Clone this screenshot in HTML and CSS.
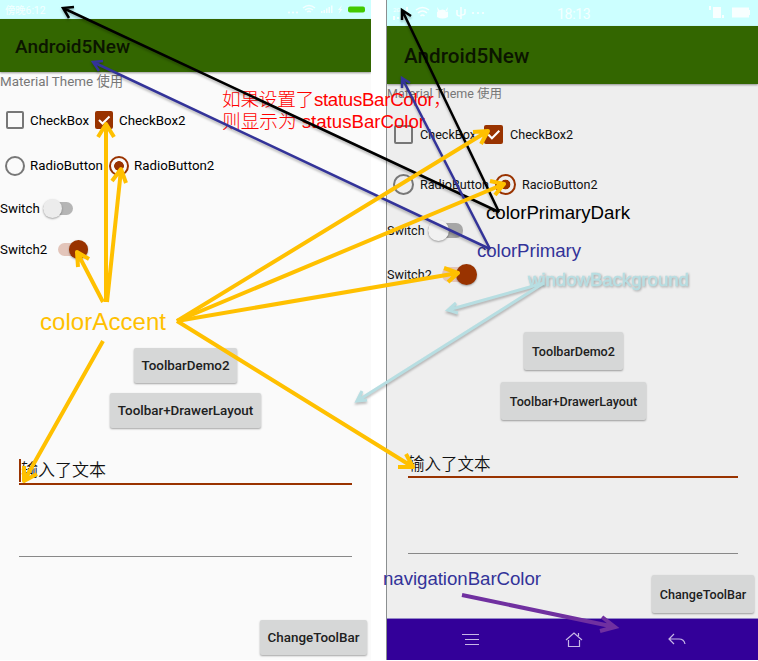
FILE: index.html
```html
<!DOCTYPE html>
<html lang="zh">
<head>
<meta charset="utf-8">
<title>Android5New</title>
<link rel="stylesheet" href="styles.css">
</head>
<body>
<main class="board">
  <section class="phone left">
    <header class="status">
      <span class="clock">傍晚6:12</span>
      <svg class="status-icons" width="84" height="19" viewBox="0 0 84 19">
        <g fill="#f4ffff"><circle cx="3" cy="12.500" r="1.100"/><circle cx="7" cy="12.500" r="1.100"/><circle cx="11" cy="12.500" r="1.100"/>
        <path d="M35 13h1.500v-2H35zM37.500 13H39v-3h-1.500zM40 13h1.500V8.500H40zM42.500 13H44V7h-1.500zM45 13h1.500V5.500H45zM56 5l-4 5h2l-1.500 4 4-5h-2z"/></g>
        <g fill="none" stroke="#f4ffff" stroke-width="1.500"><path d="M17 8q6-5 12 0M19 10q4-3 8 0M21 12q2-1.500 4 0"/></g>
        <rect x="62" y="6.500" width="17" height="6" rx="2" fill="#42c900"/>
      </svg>
    </header>
    <div class="toolbar"><h1>Android5New</h1></div>
    <p class="caption">Material Theme 使用</p>
    <div class="row checks">
      <span class="box"></span><span class="label a">CheckBox</span>
      <span class="box on"><svg viewBox="0 0 18 18"><path d="M4 9l3.500 3.500L14.500 5.500"/></svg></span><span class="label">CheckBox2</span>
    </div>
    <div class="row radios">
      <span class="radio"></span><span class="label a">RadioButton</span>
      <span class="radio on"></span><span class="label">RadioButton2</span>
    </div>
    <div class="row switch-a"><span class="label">Switch</span><span class="switch"><i></i></span></div>
    <div class="row switch-b"><span class="label">Switch2</span><span class="switch on"><i></i></span></div>
    <div class="actions">
      <button>ToolbarDemo2</button>
      <button class="wide">Toolbar+DrawerLayout</button>
    </div>
    <div class="field active"><span>输入了文本</span></div>
    <div class="field empty"></div>
    <div class="corner"><button>ChangeToolBar</button></div>
  </section>

  <section class="phone right">
    <header class="status">
      <svg class="status-icons" width="110" height="26" viewBox="0 0 110 26">
        <g fill="#f8ffff"><path d="M6 16h2v4H6zM10 17h2v2h-2zM19 7h2v4h-2zM15 14h2v6h-2z"/>
        <path d="M50 12q5.500-5 11 0v5q-5.500 3-11 0zM50 7l3 4-2 1zM61 7l-3 4 2 1z"/>
        <circle cx="86" cy="13" r="1.100"/><circle cx="91" cy="13" r="1.100"/><circle cx="96" cy="13" r="1.100"/></g>
        <g fill="none" stroke="#f8ffff" stroke-width="1.500"><path d="M29 10q6.500-5 13 0M31 13q4.500-4 9 0M33.500 16q2-2 4 0M74 7v12M70 10v4q0 2 4 2M78 9v4q0 2-4 2"/></g>
        <text x="6" y="12" class="signal">2G</text>
      </svg>
      <span class="clock">18:13</span>
      <svg class="status-icons end" width="46" height="26" viewBox="0 0 46 26">
        <path fill="#f8ffff" d="M6 7h8v11H6zM2 6h2v4H2zM15 15h2v3h-2zM25 7.500h17v10H25zM42 10h1v5h-1z"/>
      </svg>
    </header>
    <div class="toolbar"><h1>Android5New</h1></div>
    <p class="caption">Material Theme 使用</p>
    <div class="row checks">
      <span class="box"></span><span class="label a">CheckBox</span>
      <span class="box on"><svg viewBox="0 0 18 18"><path d="M4 9l3.500 3.500L14.500 5.500"/></svg></span><span class="label">CheckBox2</span>
    </div>
    <div class="row radios">
      <span class="radio"></span><span class="label a">RadioButton</span>
      <span class="radio on"></span><span class="label">RacioButton2</span>
    </div>
    <div class="row switch-a"><span class="label">Switch</span><span class="switch"><i></i></span></div>
    <div class="row switch-b"><span class="label">Switch2</span><span class="switch on"><i></i></span></div>
    <div class="actions">
      <button>ToolbarDemo2</button>
      <button class="wide">Toolbar+DrawerLayout</button>
    </div>
    <div class="field active"><span>输入了文本</span></div>
    <div class="field empty"></div>
    <div class="corner"><button>ChangeToolBar</button></div>
    <nav class="navbar">
      <svg viewBox="0 0 18 16"><path d="M0 2.500h17M3 7.500h14M3 12.500h14"/></svg>
      <svg viewBox="0 0 18 16"><path d="M1 8l8-7 8 7M13.500 1v3M3.500 8v6.500h11V8"/></svg>
      <svg viewBox="0 0 18 16"><path d="M6 2L1 7l5 5M1 7h10q5 0 6 5"/></svg>
    </nav>
  </section>

  <svg class="notes" width="758" height="661" viewBox="0 0 758 661">
    <g class="red">
      <text x="222" y="106" textLength="230">如果设置了statusBarColor，</text>
      <text x="222" y="128" textLength="203">则显示为 statusBarColor</text>
    </g>
    <text class="primary-dark" x="486" y="219" textLength="144">colorPrimaryDark</text>
    <text class="primary" x="477" y="257" textLength="104">colorPrimary</text>
    <text class="window" x="528" y="286" textLength="161">windowBackground</text>
    <text class="accent" x="40" y="330" textLength="126">colorAccent</text>
    <text class="primary" x="383" y="585" textLength="158">navigationBarColor</text>
    <g class="line black">
      <path d="M499 212L63 8M74 7L63 8L69 18"/>
      <path d="M499 212L402 10M402 20L402 10L411 16"/>
    </g>
    <g class="line blue">
      <path d="M490 249L93 62M103 61L93 62L99 71"/>
      <path d="M490 249L402 78M402 88L402 78L410 83"/>
    </g>
    <g class="line pale">
      <path d="M544 283L448 310M456 303L448 310L458 313"/>
      <path d="M544 283L357 401M362 391L357 401L367 400"/>
    </g>
    <g class="line gold">
      <path d="M106 302V125M98 137L106 124L114 137"/>
      <path d="M107 302L121 170M112 181L121 169L126 183"/>
      <path d="M103 302L77 252M78 267L77 252L89 259"/>
      <path d="M103 341L24 481M24 466L24 481L37 474"/>
      <path d="M177 321L488 131M473 132L488 131L481 144"/>
      <path d="M177 321L504 184M490 181L504 184L495 195"/>
      <path d="M177 321L458 273M444 268L458 273L448 282"/>
      <path d="M177 321L413 467M406 454L413 467L398 467"/>
    </g>
    <g class="line purple"><path d="M462 595L615 627M602 617L615 627L600 631"/></g>
  </svg>
</main>
</body>
</html>
```

FILE: styles.css
```css
* { box-sizing: border-box; }
body { margin: 0; background: #fff; font-family: Roboto, "Noto Sans CJK SC", sans-serif; color: #111; }
h1, p { margin: 0; }
.board { position: relative; display: flex; justify-content: space-between; width: 758px; height: 661px; overflow: hidden; }
.phone { display: flex; flex-direction: column; height: 660px; overflow: hidden; white-space: nowrap; }
.left { width: 371px; background: #fafafa; }
.right { width: 372px; background: #eee; border-left: 1px solid #8b8f90; }

.status { display: flex; align-items: center; justify-content: space-between; flex: none; background: #cff; color: #f4ffff; }
.left .status { height: 19px; padding-left: 5px; font-size: 10.300px; }
.left .status-icons { margin-right: 1px; }
.right .status { height: 26px; font-size: 14px; }
.right .clock { padding: 2px 0 0 66px; margin-right: auto; margin-left: -6px; letter-spacing: -.3px; }
.right .end { margin-right: 5px; }
.signal { font-size: 6px; fill: #f8ffff; }
.toolbar { display: flex; align-items: center; flex: none; background: #360; box-shadow: 0 1px 2px rgba(0,0,0,.4); color: #0b1500; }
.left .toolbar { height: 53px; padding-left: 15px; }
.right .toolbar { height: 58px; padding-left: 17px; }
.left h1 { font-size: 19px; font-weight: 500; padding-top: 1px; }
.right h1 { font-size: 20.700px; font-weight: 500; padding-top: 1px; }

.caption { flex: none; color: #777; }
.left .caption { height: 21px; line-height: 19px; font-size: 13.400px; }
.right .caption { height: 22px; line-height: 19px; font-size: 12.500px; }

.row { display: flex; align-items: center; flex: none; }
.label { flex: none; color: #000; font-size: 13.300px; }
.right .label { font-size: 12.600px; color: #111; }
.box, .radio { flex: none; border: 2px solid #777; }
.box { width: 18px; height: 18px; border-radius: 2px; }
.right .box { width: 19px; height: 19px; }
.box.on { background: #930; border: 0; }
.box svg { display: block; width: 100%; height: 100%; fill: none; stroke: #fff; stroke-width: 2; }
.radio { width: 20px; height: 20px; border-radius: 50%; }
.right .radio { width: 21px; height: 21px; }
.radio.on { border-color: #930; background: radial-gradient(circle, #930 4.500px, transparent 5.200px); }

.left .checks { height: 54px; padding-left: 6px; }
.left .radios { height: 37px; padding-left: 5px; }
.left .checks .label { margin-left: 6px; }
.left .radios .label { margin-left: 5px; }
.left .checks .a { width: 65px; }
.left .radios .a { width: 79px; }
.left .switch-a { height: 49px; }
.left .switch-b { height: 32px; }
.right .checks { height: 57px; padding-left: 7px; }
.right .radios { height: 42px; padding-left: 6px; }
.right .checks .label { margin-left: 7px; }
.right .radios .label { margin-left: 6px; }
.right .checks .a { width: 64px; }
.right .radios .a { width: 75px; }
.right .switch-a { height: 51px; }
.right .switch-b { height: 37px; }

.switch { display: flex; align-items: center; width: 30px; height: 13px; border-radius: 7px; background: #b5b5b5; }
.switch i { flex: none; width: 19px; height: 19px; border-radius: 50%; background: #ececec; box-shadow: 0 1px 2px rgba(0,0,0,.35); }
.switch.on { justify-content: flex-end; background: #e3c5ba; }
.switch.on i { background: #930; }
.switch-a .label { width: 43px; }
.left .switch-b .label { width: 58px; }
.right .switch { width: 35px; height: 15px; }
.right .switch i { width: 21px; height: 21px; }
.right .switch-a .label { width: 41px; }
.right .switch-a .switch { background: #a6a6a6; }
.right .switch-a i { background: #f1f1f1; }
.right .switch-b .label { width: 55px; }

button { flex: none; height: 35px; padding: 0; border: 0; border-radius: 2px; background: #d6d7d7; box-shadow: 0 1px 2px rgba(0,0,0,.35); color: #202020; font: 500 13.400px Roboto, sans-serif; }
.right button { height: 38px; font-size: 12.600px; }
.actions { display: flex; flex-direction: column; align-items: center; flex: none; }
.left .actions { height: 81px; margin-top: 83px; gap: 10px; }
.right .actions { height: 87px; margin-top: 39px; gap: 12px; padding-left: 2px; }
.left .actions button { width: 103px; }
.left .actions .wide { width: 151px; }
.right .actions button { width: 99px; }
.right .actions .wide { width: 145px; }

.field { flex: none; border-bottom: 1px solid #888; }
.field.active { display: flex; align-items: center; border-bottom: 2px solid #930; }
.left .field { margin: 0 19px; }
.left .active { height: 28px; margin-top: 28px; font-size: 17px; font-weight: 350; }
.left .active span { border-left: 2px solid #930; line-height: 23px; }
.left .empty { height: 72px; }
.right .field { margin: 0 20px 0 21px; }
.right .active { height: 27px; margin-top: 32px; padding-bottom: 2px; font-size: 16.500px; font-weight: 350; }
.right .empty { height: 76px; }
.corner { display: flex; justify-content: flex-end; flex: none; }
.left .corner { margin-top: 63px; padding-right: 4px; }
.left .corner button { width: 107px; }
.right .corner { margin-top: 21px; padding-right: 4px; }
.right .corner button { width: 102px; }
.navbar { display: flex; justify-content: space-between; align-items: center; flex: none; height: 42px; margin-top: auto; padding: 0 72px 0 75px; background: #309; border-top: 1px solid #9588c8; }
.navbar svg { width: 18px; height: 16px; fill: none; stroke: #c7b7e6; stroke-width: 1.200; }

.notes { position: absolute; inset: 0; font-family: "Liberation Sans", "Noto Sans CJK SC", sans-serif; font-size: 18.700px; }
.notes .red { fill: #f00; font-weight: 300; }
.primary-dark { fill: #000; }
.primary { fill: #339; }
.window { fill: #b7dee2; stroke: #b7dee2; stroke-width: .5; filter: drop-shadow(1px 1px 1px rgba(0,0,0,.3)); }
.accent { fill: #ffc000; font-size: 24px; }
.line { fill: none; stroke-width: 2.500; filter: drop-shadow(0 2px 1px rgba(0,0,0,.25)); }
.black { stroke: #000; }
.blue { stroke: #339; }
.pale { stroke: #b7dee2; stroke-width: 3; }
.gold { stroke: #ffc000; stroke-width: 4; stroke-linejoin: round; filter: none; }
.purple { stroke: #7030a0; stroke-width: 4; filter: none; }
```
